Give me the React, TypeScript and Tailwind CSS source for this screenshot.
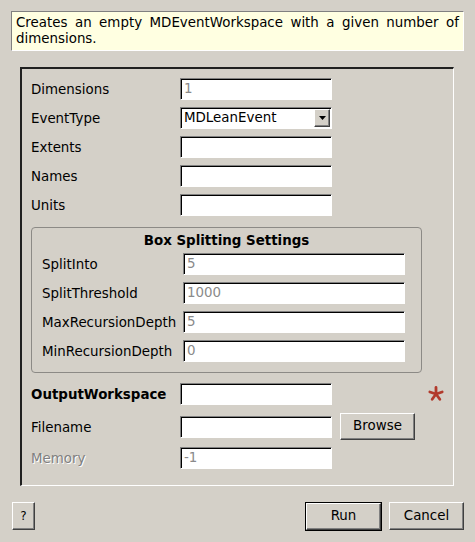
import React from 'react';

const sunken =
  'border border-t-[#808080] border-l-[#808080] border-r-white border-b-white shadow-[inset_1px_1px_0_#000]';
const raised =
  'border border-t-white border-l-white border-r-[#404040] border-b-[#404040] shadow-[inset_-1px_-1px_0_#808080]';

const Field: React.FC<{ value?: string; muted?: boolean; w?: string }> = ({ value = '', muted, w = 'w-[152px]' }) => (
  <div className={`${w} h-[22px] bg-white ${sunken} flex items-center pl-[3px] text-[13.4px] leading-[16px] ${muted ? 'text-[#8a8a8a]' : 'text-black'}`}>
    {value}
  </div>
);

const Row: React.FC<{ label: string; labelW: string; children: React.ReactNode; bold?: boolean; disabled?: boolean }> = ({
  label,
  labelW,
  children,
  bold,
  disabled,
}) => (
  <div className="flex items-center">
    <span
      className={`${labelW} text-[13.4px] leading-[16px] relative top-[1px] ${bold ? 'font-bold' : ''} ${
        disabled ? 'text-[#808080] [text-shadow:1px_1px_0_#fff]' : 'text-black'
      }`}
    >
      {label}
    </span>
    {children}
  </div>
);

const Asterisk = () => (
  <svg width="16" height="16" viewBox="0 0 16 16" className="block">
    {[0, 72, 144, 216, 288].map(a => (
      <line
        key={a}
        x1="8"
        y1="8"
        x2="8"
        y2="1.5"
        stroke="#b23a2c"
        strokeWidth="2.8"
        strokeLinecap="round"
        transform={`rotate(${a} 8 8)`}
      />
    ))}
  </svg>
);

export default function App() {
  return (
    <div className="w-[475px] h-[542px] bg-[#d4d0c8] font-['DejaVu_Sans',sans-serif] text-black pt-[11px] overflow-hidden">
      {/* description */}
      <div className="ml-[11px] w-[453px] h-[40px] bg-[#ffffe1] border border-t-[#808080] border-l-[#808080] border-r-white border-b-white px-[4px] pt-[3px] text-[13.4px] leading-[16px] text-justify">
        Creates an empty MDEventWorkspace with a given number of dimensions.
      </div>

      {/* properties frame */}
      <div className="ml-[20px] mt-[16px] w-[434px] h-[419px] border-t-2 border-l-2 border-t-[#202020] border-l-[#202020] border-r border-b border-r-white border-b-white pl-[9px] pt-[9px]">
        <div className="flex flex-col gap-[7px]">
          <Row label="Dimensions" labelW="w-[149px]">
            <Field value="1" muted />
          </Row>
          <Row label="EventType" labelW="w-[149px]">
            <div className={`w-[152px] h-[22px] bg-white ${sunken} flex items-center pl-[3px] pr-[1px] text-[13.4px] leading-[16px]`}>
              <span className="flex-1">MDLeanEvent</span>
              <div className={`w-[16px] h-[18px] bg-[#d4d0c8] ${raised} flex items-center justify-center`}>
                <svg width="7" height="4" viewBox="0 0 7 4">
                  <polygon points="0,0 7,0 3.5,4" fill="#000" />
                </svg>
              </div>
            </div>
          </Row>
          <Row label="Extents" labelW="w-[149px]">
            <Field />
          </Row>
          <Row label="Names" labelW="w-[149px]">
            <Field />
          </Row>
          <Row label="Units" labelW="w-[149px]">
            <Field />
          </Row>
        </div>

        {/* box splitting group */}
        <div className="mt-[11px] w-[391px] h-[146px] border border-[#8c8a86] rounded-[4px] pl-[10px]">
          <div className="text-center font-bold text-[13.4px] leading-[16px] pt-[5px] pr-[10px]">Box Splitting Settings</div>
          <div className="mt-[4px] flex flex-col gap-[7px]">
            <Row label="SplitInto" labelW="w-[141px]">
              <Field value="5" muted w="w-[222px]" />
            </Row>
            <Row label="SplitThreshold" labelW="w-[141px]">
              <Field value="1000" muted w="w-[222px]" />
            </Row>
            <Row label="MaxRecursionDepth" labelW="w-[141px]">
              <Field value="5" muted w="w-[222px]" />
            </Row>
            <Row label="MinRecursionDepth" labelW="w-[141px]">
              <Field value="0" muted w="w-[222px]" />
            </Row>
          </div>
        </div>

        <div className="mt-[10px] flex flex-col">
          <Row label="OutputWorkspace" labelW="w-[149px]" bold>
            <Field />
            <div className="ml-[96px]">
              <Asterisk />
            </div>
          </Row>
          <div className="mt-[8px]">
            <Row label="Filename" labelW="w-[149px]">
              <Field />
              <button className={`ml-[8px] w-[75px] h-[27px] bg-[#d4d0c8] ${raised} text-[13.4px]`}>Browse</button>
            </Row>
          </div>
          <div className="mt-[7px]">
            <Row label="Memory" labelW="w-[149px]" disabled>
              <Field value="-1" muted />
            </Row>
          </div>
        </div>
      </div>

      {/* bottom buttons */}
      <div className="mt-[16px] flex items-start px-[12px]">
        <button className={`w-[23px] h-[28px] bg-[#d4d0c8] ${raised} text-[12px]`}>?</button>
        <div className="flex-1" />
        <div className="border border-black">
          <button className={`block w-[75px] h-[27px] bg-[#d4d0c8] ${raised} text-[13.4px]`}>Run</button>
        </div>
        <button className={`ml-[7px] mr-[-1px] w-[75px] h-[28px] bg-[#d4d0c8] ${raised} text-[13.4px]`}>Cancel</button>
      </div>
    </div>
  );
}
